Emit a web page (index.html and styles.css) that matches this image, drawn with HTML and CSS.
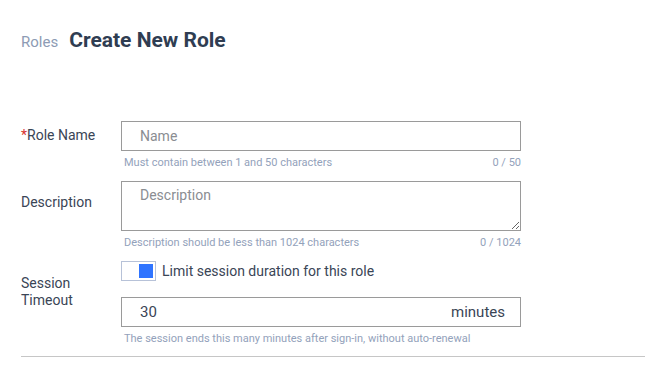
FILE: index.html
```html
<!DOCTYPE html>
<html lang="en">
<head>
    <meta charset="UTF-8">
    <title>Create New Role</title>
    <link rel="stylesheet" href="styles.css">
</head>
<body>

<div class="header">
    <span class="crumb">Roles</span>
    <h1>Create New Role</h1>
</div>

<div class="role-form">
    <div class="form-row">
        <label class="form-label"><span class="required">*</span>Role Name</label>
        <div class="form-field">
            <input type="text" class="text-input" placeholder="Name">
            <div class="hint">
                <span>Must contain between 1 and 50 characters</span>
                <span>0 / 50</span>
            </div>
        </div>
    </div>

    <div class="form-row">
        <label class="form-label label-mid">Description</label>
        <div class="form-field">
            <textarea class="text-area" placeholder="Description"></textarea>
            <div class="hint">
                <span>Description should be less than 1024 characters</span>
                <span>0 / 1024</span>
            </div>
        </div>
    </div>

    <div class="form-row session-row">
        <label class="form-label label-session">Session<br>Timeout</label>
        <div class="form-field">
            <div class="toggle-line">
                <span class="toggle"><span class="toggle-knob"></span></span>
                <span class="toggle-text">Limit session duration for this role</span>
            </div>
            <div class="unit-input">
                <span class="unit-value">30</span>
                <span class="unit-name">minutes</span>
            </div>
            <div class="hint">
                <span>The session ends this many minutes after sign-in, without auto-renewal</span>
            </div>
        </div>
    </div>
</div>

<div class="divider"></div>

</body>
</html>
```

FILE: styles.css
```css
body {
    font-family: Roboto, "Noto Sans", sans-serif;
    margin: 0;
    padding: 0 0 0 21px;
    background-color: #fff;
    color: #3a4556;
}

.header {
    display: flex;
    align-items: baseline;
    gap: 11px;
    padding-top: 28px;
}

.header .crumb {
    font-size: 15px;
    color: #8d9bb4;
}

.header h1 {
    margin: 0;
    font-size: 21px;
    font-weight: 700;
    color: #2f3d52;
}

.role-form {
    margin-top: 69px;
}

.form-row {
    display: flex;
    margin-bottom: 12px;
}

.session-row {
    margin-bottom: 11px;
}

.form-label {
    width: 100px;
    font-size: 14px;
    line-height: 17px;
    padding-top: 6px;
    color: #3a4556;
}

.form-label .required {
    color: #d8322e;
}

.label-mid {
    padding-top: 13px;
}

.label-session {
    padding-top: 14px;
}

.form-field {
    width: 400px;
}

.text-input,
.text-area,
.unit-input {
    box-sizing: border-box;
    width: 400px;
    border: 1px solid #9a9a9a;
    border-radius: 0;
    font-family: inherit;
    font-size: 14px;
    color: #3a4556;
    margin: 0;
    display: block;
}

.text-input {
    height: 30px;
    padding: 0 18px;
}

.text-area {
    height: 50px;
    padding: 5px 18px;
    resize: vertical;
}

.text-input::placeholder,
.text-area::placeholder {
    color: #8a8d92;
}

.hint {
    display: flex;
    justify-content: space-between;
    font-size: 11px;
    line-height: 13px;
    color: #93a2bb;
    padding: 5px 0 0 3px;
}

.toggle-line {
    display: flex;
    align-items: center;
    gap: 6px;
    margin-bottom: 16px;
}

.toggle {
    box-sizing: border-box;
    width: 35px;
    height: 20px;
    border: 1px solid #b7c2d8;
    display: flex;
    justify-content: flex-end;
    align-items: center;
    padding-right: 2px;
}

.toggle-knob {
    width: 14px;
    height: 14px;
    background-color: #2f74ff;
}

.toggle-text {
    font-size: 14px;
}

.unit-input {
    height: 30px;
    padding: 0 15px 0 18px;
    display: flex;
    justify-content: space-between;
    align-items: center;
    font-size: 15px;
}

.divider {
    height: 1px;
    background-color: #c6c6c6;
}
```
